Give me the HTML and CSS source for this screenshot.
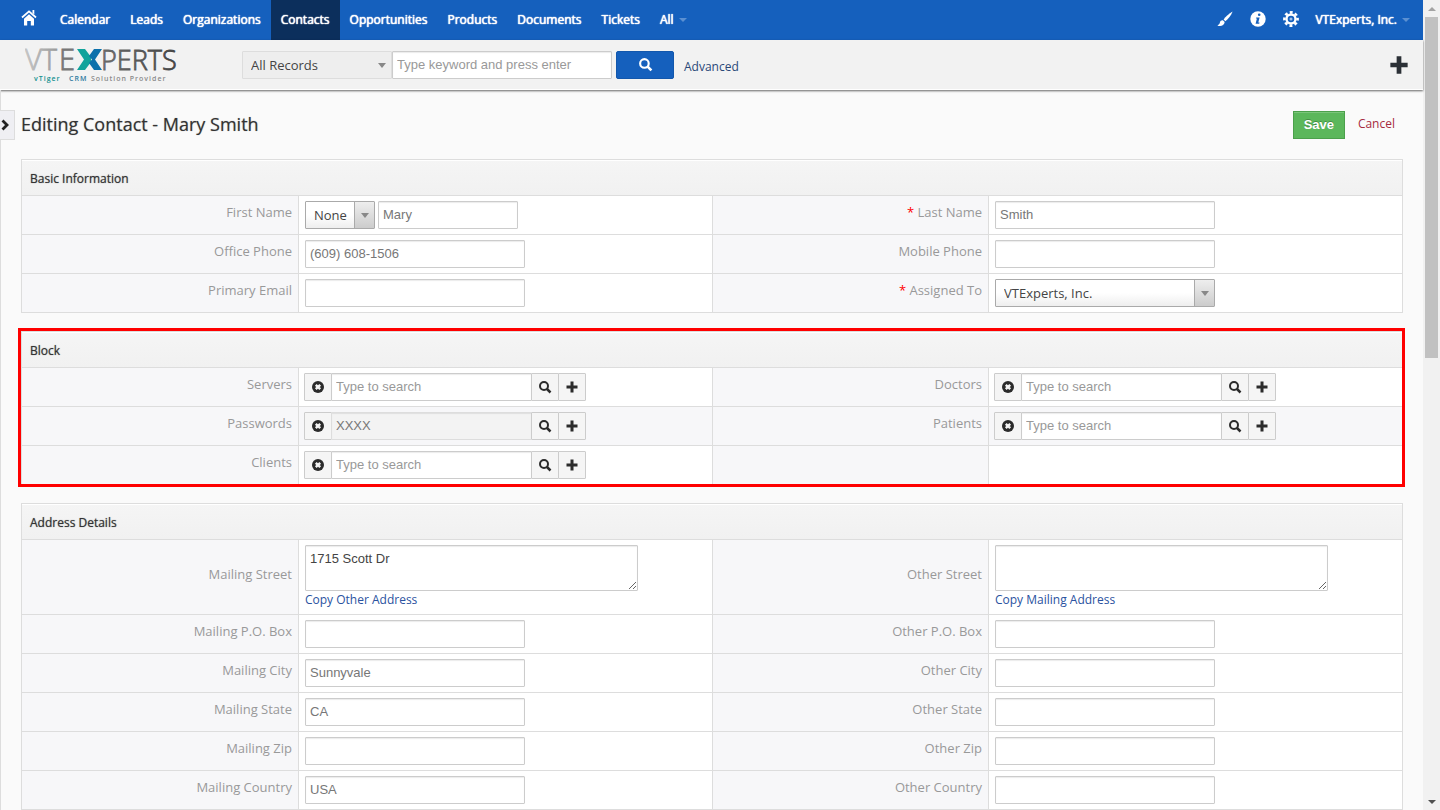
FILE: index.html
```html
<!DOCTYPE html>
<html lang="en">
<head>
    <meta charset="UTF-8">
    <meta name="viewport" content="width=device-width, initial-scale=1.0">
    <title>Editing Contact - Mary Smith</title>
    <link rel="stylesheet" href="styles.css">
</head>
<body>
    <svg class="sprite" aria-hidden="true">
        <symbol id="i-search" viewBox="0 0 14 14"><circle cx="6" cy="6" r="4" fill="none" stroke="currentColor" stroke-width="2"/><path d="M9 9l3.500 3.500" stroke="currentColor" stroke-width="2.500"/></symbol>
        <symbol id="i-plus" viewBox="0 0 14 14"><path d="M5.5 1.5h3v4h4v3h-4v4h-3v-4h-4v-3h4z" fill="currentColor"/></symbol>
        <symbol id="i-remove" viewBox="0 0 14 14"><circle cx="7" cy="7" r="6" fill="currentColor"/><path d="M4.8 4.8l4.4 4.4M9.2 4.8l-4.4 4.4" stroke="#f5f5f5" stroke-width="2.4"/></symbol>
    </svg>

    <div class="page">
        <nav class="navbar">
            <a class="nav-home" href="#" aria-label="Home">
                <svg width="16" height="16" viewBox="0 0 16 16"><path d="M1 7.500L8 1.400l7 6.100" fill="none" stroke="#fff" stroke-width="1.800"/><path d="M11.500 0h1.800v4.500l-1.800-1.600z" fill="#fff"/><path d="M8 4.200l5 4.600V15.500H9.800V11H6.200v4.500H3V8.800z" fill="#fff"/></svg>
            </a>
            <a href="#">Calendar</a>
            <a href="#">Leads</a>
            <a href="#">Organizations</a>
            <a class="active" href="#">Contacts</a>
            <a href="#">Opportunities</a>
            <a href="#">Products</a>
            <a href="#">Documents</a>
            <a href="#">Tickets</a>
            <a href="#">All <span class="caret"></span></a>
            <div class="nav-right">
                <a class="nav-icon" href="#" aria-label="Theme">
                    <svg width="16" height="16" viewBox="0 0 16 16"><path d="M15.600.4C12 2.400 8.600 5.400 6.600 8.600l1.800 1.700C11.400 7.800 14 4.400 15.600.4z" fill="#fff"/><path d="M5.900 9.300c-1.500-.2-2.700.7-3 2.200-.3 1.300-1 2.300-2.500 2.900 2.500 1.400 6.900.6 7.300-3.300z" fill="#fff"/></svg>
                </a>
                <a class="nav-icon" href="#" aria-label="Info">
                    <svg width="16" height="16" viewBox="0 0 16 16"><circle cx="8" cy="8" r="7.700" fill="#fff"/><circle cx="9.200" cy="3.800" r="1.300" fill="#1560bd"/><path d="M6.200 6.400h3.400l-1.300 5.200h1.200l-.3 1.200H5.600l1.300-5.200H5.900z" fill="#1560bd"/></svg>
                </a>
                <a class="nav-icon" href="#" aria-label="Settings">
                    <svg width="16" height="16" viewBox="0 0 16 16"><circle cx="8" cy="8" r="6.600" fill="none" stroke="#fff" stroke-width="2.600" stroke-dasharray="2.900 2.284" stroke-dashoffset="1.450"/><circle cx="8" cy="8" r="4.500" fill="none" stroke="#fff" stroke-width="2.400"/><circle cx="8" cy="8" r="1.500" fill="#fff" opacity=".6"/></svg>
                </a>
                <a class="user" href="#">VTExperts, Inc. <span class="caret"></span></a>
            </div>
        </nav>

        <header class="header">
            <a class="logo" href="#" aria-label="VTExperts">
                <svg width="156" height="47" viewBox="0 0 156 47">
                    <defs>
                        <linearGradient id="vt"><stop offset="0" stop-color="#c4c4c4"/><stop offset="1" stop-color="#9a9a9a"/></linearGradient>
                        <linearGradient id="ex"><stop offset="0" stop-color="#6a6a6a"/><stop offset="1" stop-color="#444"/></linearGradient>
                    </defs>
                    <text class="logo-text logo-vt" x="0" y="29" fill="url(#vt)" stroke="url(#vt)">VT</text>
                    <text class="logo-text logo-vt" x="34" y="29" fill="#777" stroke="#777">E</text>
                    <path d="M52 8h8l6 8v5l-6 8h-8l7-10.500z" fill="#11a39b"/>
                    <path d="M77 8h-8l-5 7 3 3.500-3 3.500 5 7h8l-7-10.500z" fill="#0b70ab"/>
                    <text class="logo-text" x="76" y="29" fill="url(#ex)" stroke="url(#ex)">PERTS</text>
                    <text class="logo-tag" x="9" y="40"><tspan fill="#11908f">vTiger</tspan><tspan x="44" fill="#2f7aa0">CRM</tspan><tspan x="66" fill="#8a8a8a">Solution Provider</tspan></text>
                </svg>
            </a>
            <form class="search-form">
                <div class="select select-plain select-module">
                    <select aria-label="Module"><option>All Records</option></select>
                </div>
                <input type="text" placeholder="Type keyword and press enter" aria-label="Keyword">
                <button type="button" class="btn-search" aria-label="Search"><svg width="15" height="15"><use href="#i-search"/></svg></button>
                <a class="advanced" href="#">Advanced</a>
            </form>
            <button type="button" class="quick-create" aria-label="Quick create"><svg width="22" height="22"><use href="#i-plus"/></svg></button>
        </header>

        <main class="content">
            <button type="button" class="panel-toggle" aria-label="Show panel"><svg width="9" height="12" viewBox="0 0 9 12"><path d="M1.500 1.500L6 6l-4.500 4.500" fill="none" stroke="#222" stroke-width="2.800"/></svg></button>

            <div class="title-bar">
                <h1>Editing Contact - Mary Smith</h1>
                <button type="submit" class="btn-save">Save</button>
                <a class="cancel" href="#">Cancel</a>
            </div>

            <div class="block">
                <table class="fields">
                    <colgroup><col class="col-label"><col class="col-value"><col class="col-label"><col class="col-value"></colgroup>
                    <thead><tr><th colspan="4">Basic Information</th></tr></thead>
                    <tbody>
                        <tr>
                            <td class="label"><label for="firstname">First Name</label></td>
                            <td><div class="name-row">
                                <div class="select select-salutation"><select aria-label="Salutation"><option>None</option></select></div>
                                <input type="text" class="short" id="firstname" value="Mary">
                            </div></td>
                            <td class="label"><label for="lastname"><span class="required">*</span> Last Name</label></td>
                            <td><input type="text" id="lastname" value="Smith"></td>
                        </tr>
                        <tr>
                            <td class="label"><label for="phone">Office Phone</label></td>
                            <td><input type="text" id="phone" value="(609) 608-1506"></td>
                            <td class="label"><label for="mobile">Mobile Phone</label></td>
                            <td><input type="text" id="mobile"></td>
                        </tr>
                        <tr>
                            <td class="label"><label for="email">Primary Email</label></td>
                            <td><input type="text" id="email"></td>
                            <td class="label"><label for="assigned"><span class="required">*</span> Assigned To</label></td>
                            <td><div class="select"><select id="assigned"><option>VTExperts, Inc.</option></select></div></td>
                        </tr>
                    </tbody>
                </table>
            </div>

            <div class="block highlight">
                <table class="fields">
                    <colgroup><col class="col-label"><col class="col-value"><col class="col-label"><col class="col-value"></colgroup>
                    <thead><tr><th colspan="4">Block</th></tr></thead>
                    <tbody>
                        <tr>
                            <td class="label"><label for="servers">Servers</label></td>
                            <td><div class="reference">
                                <button type="button" aria-label="Clear"><svg width="14" height="14"><use href="#i-remove"/></svg></button>
                                <input type="text" id="servers" placeholder="Type to search">
                                <button type="button" aria-label="Search"><svg width="14" height="14"><use href="#i-search"/></svg></button>
                                <button type="button" aria-label="Add"><svg width="14" height="14"><use href="#i-plus"/></svg></button>
                            </div></td>
                            <td class="label"><label for="doctors">Doctors</label></td>
                            <td><div class="reference">
                                <button type="button" aria-label="Clear"><svg width="14" height="14"><use href="#i-remove"/></svg></button>
                                <input type="text" id="doctors" placeholder="Type to search">
                                <button type="button" aria-label="Search"><svg width="14" height="14"><use href="#i-search"/></svg></button>
                                <button type="button" aria-label="Add"><svg width="14" height="14"><use href="#i-plus"/></svg></button>
                            </div></td>
                        </tr>
                        <tr class="current">
                            <td class="label"><label for="passwords">Passwords</label></td>
                            <td><div class="reference">
                                <button type="button" aria-label="Clear"><svg width="14" height="14"><use href="#i-remove"/></svg></button>
                                <input type="text" id="passwords" value="XXXX" readonly>
                                <button type="button" aria-label="Search"><svg width="14" height="14"><use href="#i-search"/></svg></button>
                                <button type="button" aria-label="Add"><svg width="14" height="14"><use href="#i-plus"/></svg></button>
                            </div></td>
                            <td class="label"><label for="patients">Patients</label></td>
                            <td><div class="reference">
                                <button type="button" aria-label="Clear"><svg width="14" height="14"><use href="#i-remove"/></svg></button>
                                <input type="text" id="patients" placeholder="Type to search">
                                <button type="button" aria-label="Search"><svg width="14" height="14"><use href="#i-search"/></svg></button>
                                <button type="button" aria-label="Add"><svg width="14" height="14"><use href="#i-plus"/></svg></button>
                            </div></td>
                        </tr>
                        <tr>
                            <td class="label"><label for="clients">Clients</label></td>
                            <td><div class="reference">
                                <button type="button" aria-label="Clear"><svg width="14" height="14"><use href="#i-remove"/></svg></button>
                                <input type="text" id="clients" placeholder="Type to search">
                                <button type="button" aria-label="Search"><svg width="14" height="14"><use href="#i-search"/></svg></button>
                                <button type="button" aria-label="Add"><svg width="14" height="14"><use href="#i-plus"/></svg></button>
                            </div></td>
                            <td class="label"></td>
                            <td></td>
                        </tr>
                    </tbody>
                </table>
            </div>

            <div class="block">
                <table class="fields">
                    <colgroup><col class="col-label"><col class="col-value"><col class="col-label"><col class="col-value"></colgroup>
                    <thead><tr><th colspan="4">Address Details</th></tr></thead>
                    <tbody>
                        <tr>
                            <td class="label"><label for="mstreet">Mailing Street</label></td>
                            <td><textarea id="mstreet">1715 Scott Dr</textarea><a class="copy" href="#">Copy Other Address</a></td>
                            <td class="label"><label for="ostreet">Other Street</label></td>
                            <td><textarea id="ostreet"></textarea><a class="copy" href="#">Copy Mailing Address</a></td>
                        </tr>
                        <tr>
                            <td class="label"><label for="mpobox">Mailing P.O. Box</label></td>
                            <td><input type="text" id="mpobox"></td>
                            <td class="label"><label for="opobox">Other P.O. Box</label></td>
                            <td><input type="text" id="opobox"></td>
                        </tr>
                        <tr>
                            <td class="label"><label for="mcity">Mailing City</label></td>
                            <td><input type="text" id="mcity" value="Sunnyvale"></td>
                            <td class="label"><label for="ocity">Other City</label></td>
                            <td><input type="text" id="ocity"></td>
                        </tr>
                        <tr>
                            <td class="label"><label for="mstate">Mailing State</label></td>
                            <td><input type="text" id="mstate" value="CA"></td>
                            <td class="label"><label for="ostate">Other State</label></td>
                            <td><input type="text" id="ostate"></td>
                        </tr>
                        <tr>
                            <td class="label"><label for="mzip">Mailing Zip</label></td>
                            <td><input type="text" id="mzip"></td>
                            <td class="label"><label for="ozip">Other Zip</label></td>
                            <td><input type="text" id="ozip"></td>
                        </tr>
                        <tr>
                            <td class="label"><label for="mcountry">Mailing Country</label></td>
                            <td><input type="text" id="mcountry" value="USA"></td>
                            <td class="label"><label for="ocountry">Other Country</label></td>
                            <td><input type="text" id="ocountry"></td>
                        </tr>
                    </tbody>
                </table>
            </div>
        </main>
    </div>

    <div class="scrollbar" aria-hidden="true">
        <span class="arrow up"></span>
        <div class="track"><div class="thumb"></div></div>
        <span class="arrow down"></span>
    </div>
</body>
</html>
```

FILE: styles.css
```css
* {
    box-sizing: border-box;
}

body {
    margin: 0;
    height: 100vh;
    display: flex;
    overflow: hidden;
    font-family: "Open Sans", "Noto Sans", sans-serif;
    font-size: 13px;
    line-height: 20px;
    color: #333;
    background-color: #fafafa;
}

a {
    text-decoration: none;
}

button {
    display: flex;
    align-items: center;
    justify-content: center;
    padding: 0;
    cursor: pointer;
}

.sprite {
    position: absolute;
    width: 0;
    height: 0;
}

.page {
    flex: 1;
    min-width: 0;
}

/* top navigation */
.navbar {
    display: flex;
    height: 40px;
    background-color: #1560bd;
}

.navbar a {
    display: flex;
    align-items: center;
    padding: 0 10px;
    font-size: 12px;
    color: #fff;
    text-shadow: 0 0 1px #fff, 0 0 1px #fff;
}

.navbar .nav-home {
    padding: 0 13px 4px 21px;
}

.navbar a.active {
    background-color: #0c2f5c;
}

.nav-right {
    display: flex;
    margin-left: auto;
    padding-right: 3px;
}

.navbar .nav-icon {
    padding: 0 8px 3px 9px;
}

.navbar .user {
    padding-left: 8px;
}

.caret {
    margin-left: 5px;
    border: 4px solid transparent;
    border-top-color: #5b90d2;
    border-bottom: 0;
}

/* logo and search */
.header {
    position: relative;
    display: flex;
    align-items: center;
    height: 50px;
    padding: 0 13px 0 25px;
    background-color: #f2f2f2;
    border-bottom: 1px solid #fff;
    box-shadow: 0 1px 2px rgba(0, 0, 0, 0.6);
}

.logo {
    width: 217px;
    height: 47px;
}

.logo-text {
    font-size: 27px;
    font-weight: 300;
    stroke-width: 0.8;
}

.logo-vt {
    font-size: 29px;
}

.logo-tag {
    font-size: 7px;
    font-weight: 600;
    letter-spacing: 1px;
}

.search-form {
    display: flex;
    align-items: center;
}

.btn-search {
    width: 58px;
    height: 28px;
    margin: 0 10px 0 4px;
    color: #fff;
    background-color: #1560bd;
    border: 1px solid #1257ac;
    border-radius: 2px;
}

.advanced {
    padding-top: 4px;
    font-size: 12px;
    color: #2a4878;
}

.quick-create {
    margin-left: auto;
    color: #2b3036;
    background: none;
    border: 0;
}

/* form controls */
input[type="text"],
textarea {
    display: block;
    width: 220px;
    height: 28px;
    margin: 0;
    padding: 2px 4px 4px;
    font: 13px/20px "Liberation Sans", Arial, sans-serif;
    color: #777;
    background-color: #fff;
    border: 1px solid #ccc;
    border-radius: 1px;
    box-shadow: inset 0 1px 1px rgba(0, 0, 0, 0.08);
}

input[type="text"].short {
    width: 140px;
}

input::placeholder {
    color: #999;
}

.search-form input[type="text"] {
    padding: 3px 4px;
}

textarea {
    width: 333px;
    height: 46px;
    padding-top: 3px;
    color: #444;
}

.select {
    position: relative;
    width: 220px;
}

.select select {
    display: block;
    width: 100%;
    height: 28px;
    padding: 0 24px 0 8px;
    appearance: none;
    font: inherit;
    color: #444;
    background: linear-gradient(#fff 50%, #eee);
    border: 1px solid #aaa;
    border-radius: 1px;
}

.select::before {
    content: "";
    position: absolute;
    top: 1px;
    right: 1px;
    bottom: 1px;
    width: 19px;
    background: linear-gradient(#eee, #ccc);
    border-left: 1px solid #aaa;
    pointer-events: none;
}

.select::after {
    content: "";
    position: absolute;
    top: 12px;
    right: 6px;
    border: 4px solid transparent;
    border-top: 5px solid #888;
    border-bottom: 0;
    pointer-events: none;
}

.select-salutation {
    width: 70px;
}

.select-module {
    width: 150px;
}

.select-plain select {
    background: #eee;
    border-color: #ddd;
}

.select-plain::before {
    display: none;
}

.name-row {
    display: flex;
    gap: 3px;
}

/* related record picker */
.reference {
    display: flex;
    margin-left: -1px;
}

.reference button {
    width: 28px;
    height: 28px;
    color: #2b2b2b;
    background-color: #f5f5f5;
    border: 1px solid #ccc;
    border-radius: 1px;
}

.reference input[type="text"] {
    width: 201px;
    margin-left: -1px;
}

.reference input[readonly] {
    background-color: #f3f3f3;
    border-color: #ddd;
}

.reference input + button,
.reference button + button {
    margin-left: -1px;
}

/* content */
.content {
    position: relative;
    padding: 21px 20px 0;
    border-left: 1px solid #ddd;
}

.panel-toggle {
    position: absolute;
    top: 20px;
    left: -1px;
    width: 15px;
    height: 30px;
    padding-right: 4px;
    background-color: #efeff3;
    border: 1px solid #ddd;
    border-left: 0;
}

.title-bar {
    display: flex;
    align-items: center;
    height: 28px;
    margin-bottom: 20px;
    padding-right: 8px;
}

h1 {
    flex: 1;
    margin: 0;
    padding-bottom: 2px;
    font-size: 18px;
    font-weight: 400;
    text-shadow: 0 0 1px #999;
}

.btn-save {
    width: 52px;
    height: 28px;
    margin-right: 13px;
    font: bold 13px/20px "Liberation Sans", Arial, sans-serif;
    color: #fff;
    text-shadow: 0 -1px 0 rgba(0, 0, 0, 0.25);
    background-color: #5bb75b;
    border: 1px solid #4ba04b;
    box-shadow: inset 0 1px 0 rgba(255, 255, 255, 0.2);
}

.cancel {
    padding-bottom: 2px;
    font-size: 12px;
    color: #a62a3e;
}

.block {
    position: relative;
    margin-bottom: 18px;
}

.highlight::after {
    content: "";
    position: absolute;
    top: -3px;
    left: -3px;
    right: -2px;
    bottom: -2px;
    border: 3px solid #f00;
    pointer-events: none;
}

.fields {
    width: 100%;
    table-layout: fixed;
    border-collapse: separate;
    border-spacing: 0;
    background-color: #fff;
    border: 1px solid #ddd;
}

.col-label {
    width: 20%;
}

.col-value {
    width: 30%;
}

.fields th {
    height: 35px;
    padding: 2px 8px 0;
    font-size: 12px;
    font-weight: 400;
    text-align: left;
    text-shadow: 0 0 1px #777;
    background: linear-gradient(#f5f5f5, #f1f1f1);
    box-shadow: inset 0 1px 0 #fff;
}

.fields td {
    height: 39px;
    padding: 5px 6px;
    border-top: 1px solid #ddd;
    border-left: 1px solid #ddd;
}

.fields td.label {
    padding: 4px 6px 11px;
    text-align: right;
    color: #999;
    background-color: #f7f7f9;
}

.fields td:first-child {
    border-left: 0;
}

.fields tr.current td {
    background-color: #f7f7f9;
}

.required {
    color: #f00;
}

.copy {
    display: block;
    font-size: 12px;
    line-height: 18px;
    color: #2a52a0;
}

/* scrollbar */
.scrollbar {
    display: flex;
    flex-direction: column;
    align-items: center;
    width: 17px;
    background-color: #f1f1f1;
}

.track {
    flex: 1;
    width: 13px;
}

.thumb {
    height: 44%;
    background-color: #c1c1c1;
}

.arrow {
    height: 17px;
    display: flex;
    align-items: center;
}

.arrow::before {
    content: "";
    border: 4px solid transparent;
}

.arrow.up::before {
    border-top: 0;
    border-bottom-color: #a3a3a3;
}

.arrow.down::before {
    border-bottom: 0;
    border-top-color: #505050;
}
```
